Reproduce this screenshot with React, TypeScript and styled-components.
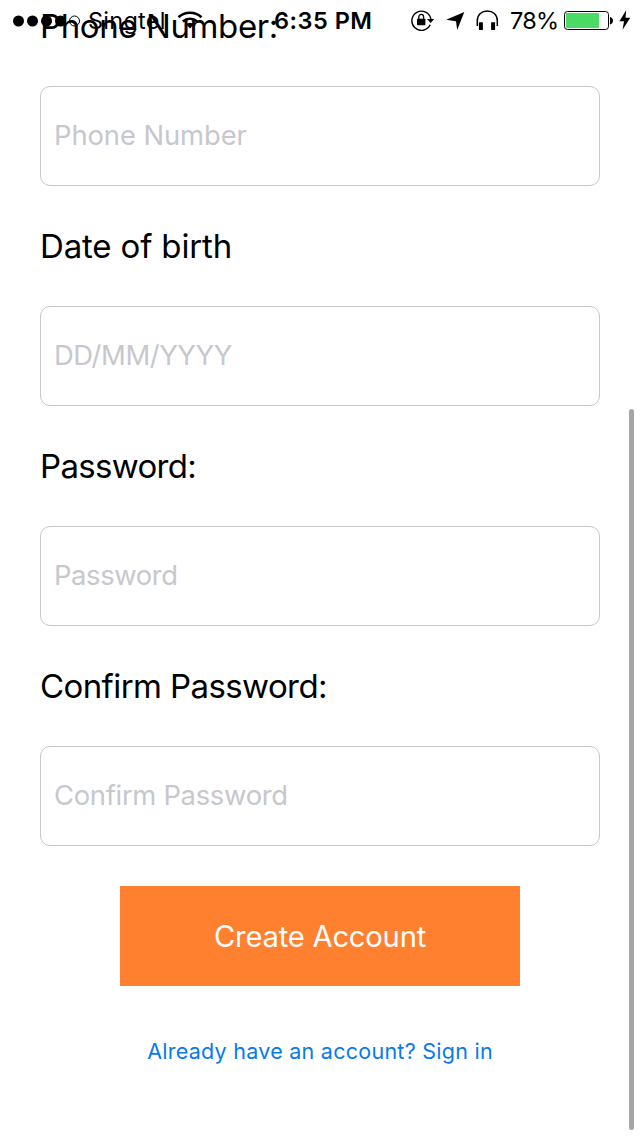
import React from "react";
import styled, { createGlobalStyle } from "styled-components";

const GlobalStyle = createGlobalStyle`
  * { box-sizing: border-box; }
  body {
    margin: 0;
    background: #fff;
    font-family: Inter, "Liberation Sans", sans-serif;
    color: #000;
  }
`;

const Screen = styled.div`
  position: relative;
  width: 640px;
  height: 1136px;
  overflow: hidden;
  background: #fff;
`;

const StatusBar = styled.header`
  position: absolute;
  inset: 0 0 auto 0;
  height: 41px;
  display: grid;
  grid-template-columns: 274px 137px 1fr;
  align-items: center;
`;

const StatusGroup = styled.div<{ $start?: number }>`
  display: flex;
  align-items: center;
  height: 41px;
  padding-left: ${(p) => p.$start ?? 0}px;
  svg { display: block; flex: none; }
`;

const StatusText = styled.span<{ $spacing: number; $width?: number; $bold?: boolean }>`
  flex: none;
  font-size: 23.5px;
  line-height: 40px;
  font-weight: ${(p) => (p.$bold ? 600 : 400)};
  letter-spacing: ${(p) => p.$spacing}px;
  width: ${(p) => (p.$width ? `${p.$width}px` : "auto")};
  white-space: nowrap;
`;

const Gap = styled.span<{ $w: number }>`
  flex: none;
  width: ${(p) => p.$w}px;
`;

const Form = styled.form`
  display: flex;
  flex-direction: column;
  padding: 0 40px;
`;

const Field = styled.label`
  display: flex;
  flex-direction: column;
  height: 220px;
  &:first-child { height: 206px; margin-top: -20px; }
`;

const FieldLabel = styled.span<{ $spacing: number }>`
  height: 120px;
  display: flex;
  align-items: center;
  font-size: 33px;
  line-height: 40px;
  padding-bottom: 1px;
  white-space: nowrap;
  letter-spacing: ${(p) => p.$spacing}px;
  ${Field}:first-child & { height: 106px; padding-bottom: 15px; }
`;

const Input = styled.input<{ $spacing: number }>`
  width: 560px;
  height: 100px;
  padding: 0 13px 3px;
  border: 1px solid #c8c8cc;
  border-radius: 10px;
  background: #fff;
  outline: none;
  font: 400 27.4px Inter, "Liberation Sans", sans-serif;
  letter-spacing: ${(p) => p.$spacing}px;
  &::placeholder { color: #c7c7cd; opacity: 1; }
`;

const SubmitButton = styled.button`
  align-self: center;
  width: 400px;
  height: 100px;
  margin-top: 40px;
  padding: 0;
  border: 0;
  background: #ff802e;
  color: #fff;
  font: 400 29.2px Inter, "Liberation Sans", sans-serif;
  letter-spacing: -0.22px;
`;

const SignInLink = styled.a`
  align-self: center;
  margin-top: 50px;
  color: #067aee;
  font-size: 21.5px;
  line-height: 30px;
  letter-spacing: 0.26px;
  white-space: nowrap;
  text-decoration: none;
`;

const ScrollIndicator = styled.div`
  position: absolute;
  top: 409px;
  right: 6px;
  width: 5px;
  height: 721px;
  border-radius: 3px;
  background: #a5a5a5;
`;

const Signal = () => (
  <svg width="68" height="12" viewBox="0 0 68 12">
    {[6, 20, 34, 48].map((x) => (
      <circle key={x} cx={x - 0.5} cy="6" r="5.5" />
    ))}
    <circle cx="61.5" cy="6" r="5" fill="none" stroke="#000" />
  </svg>
);

const Wifi = () => (
  <svg width="26" height="19" viewBox="0 0 26 19">
    <path d="M1.5 6.2C8 .2 18 .2 24.5 6.2" fill="none" stroke="#000" strokeWidth="2.6" />
    <path d="M5.8 10.4C10 6.8 16 6.8 20.2 10.4" fill="none" stroke="#000" strokeWidth="2.6" />
    <path d="M9 13.3Q13 10.1 17 13.3L13 17.5Z" />
  </svg>
);

const RotationLock = () => (
  <svg width="24" height="21" viewBox="0 0 24 21">
    <path d="M19.2 14.8A9.6 9.6 0 1 1 19.9 9" fill="none" stroke="#000" strokeWidth="1.4" />
    <path d="M16 9h7.2L19.6 13Z" />
    <rect x="6" y="8.7" width="8.4" height="6.5" rx=".6" />
    <path d="M7.8 9.3V6.8a2.4 2.4 0 0 1 4.8 0v2.5" fill="none" stroke="#000" strokeWidth="1.3" />
  </svg>
);

const LocationArrow = () => (
  <svg width="19" height="19" viewBox="0 0 19 19">
    <path d="M18.3 1L11.2 19L10 10.2L.2 8.8Z" />
  </svg>
);

const Headphones = () => (
  <svg width="23" height="21" viewBox="0 0 23 21">
    <path d="M1.3 16V10.8C1.3 4.5 5.8 .9 11.3 .9S21.3 4.5 21.3 10.8V16" fill="none" stroke="#000" strokeWidth="1.5" />
    <rect x="2.9" y="12.2" width="4" height="7.8" rx=".5" />
    <rect x="15.1" y="12.2" width="4" height="7.8" rx=".5" />
  </svg>
);

const Battery = () => (
  <svg width="49" height="19" viewBox="0 0 49 19">
    <rect x=".5" y=".5" width="44" height="18" rx="3" fill="none" stroke="#000" />
    <rect x="2" y="2" width="33" height="15" rx="1" fill="#4cd964" />
    <path d="M46 6C50 7 50 12.4 46 13.4Z" />
  </svg>
);

const Bolt = () => (
  <svg width="12" height="21" viewBox="0 0 12 21">
    <path d="M7.2.3L.4 11.2H5L3.6 19.8L11.3 7.8H6.5Z" />
  </svg>
);

const fields = [
  { label: "Phone Number:", placeholder: "Phone Number", labelSpacing: -0.4, spacing: -0.09 },
  { label: "Date of birth", placeholder: "DD/MM/YYYY", labelSpacing: -0.16, spacing: -0.42 },
  { label: "Password:", placeholder: "Password", labelSpacing: -0.68, spacing: -0.38 },
  { label: "Confirm Password:", placeholder: "Confirm Password", labelSpacing: -0.59, spacing: -0.3 },
];

export default function App() {
  return (
    <>
      <GlobalStyle />
      <Screen>
        <Form>
          {fields.map((f) => (
            <Field key={f.label}>
              <FieldLabel $spacing={f.labelSpacing}>{f.label}</FieldLabel>
              <Input $spacing={f.spacing} placeholder={f.placeholder} />
            </Field>
          ))}
          <SubmitButton type="button">Create Account</SubmitButton>
          <SignInLink>Already have an account? Sign in</SignInLink>
        </Form>
        <StatusBar>
          <StatusGroup $start={13}>
            <Signal />
            <Gap $w={7} />
            <StatusText $spacing={0.25} $width={89}>Singtel</StatusText>
            <Wifi />
          </StatusGroup>
          <StatusGroup>
            <StatusText $spacing={0.5} $bold>6:35 PM</StatusText>
          </StatusGroup>
          <StatusGroup>
            <RotationLock />
            <Gap $w={11} />
            <LocationArrow />
            <Gap $w={11} />
            <Headphones />
            <Gap $w={11} />
            <StatusText $spacing={-0.8} $width={54}>78%</StatusText>
            <Battery />
            <Gap $w={6} />
            <Bolt />
          </StatusGroup>
        </StatusBar>
        <ScrollIndicator />
      </Screen>
    </>
  );
}
